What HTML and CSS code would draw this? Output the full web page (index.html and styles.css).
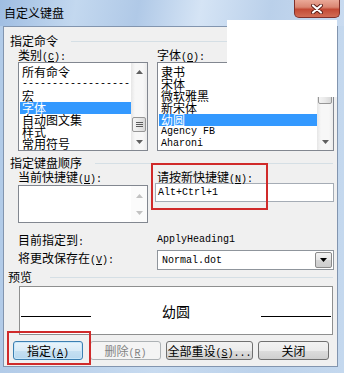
FILE: index.html
```html
<!DOCTYPE html>
<html lang="zh-CN">
<head>
  <meta charset="UTF-8" />
  <title>自定义键盘</title>
  <link rel="stylesheet" href="styles.css">
</head>
<body>
  <div class="window">
    <div class="titlebar">
      <span class="title">自定义键盘</span>
      <span class="close">
        <svg width="12" height="10" viewBox="0 0 12 10">
          <path d="M2 1.5 L10 8.5 M10 1.5 L2 8.5" stroke="#5b1d16" stroke-width="4" stroke-linecap="round"/>
          <path d="M2 1.5 L10 8.5 M10 1.5 L2 8.5" stroke="#fff" stroke-width="2.2" stroke-linecap="round"/>
        </svg>
      </span>
    </div>

    <div class="client">
      <div class="group-title">指定命令</div>
      <div class="pair">
        <div class="field">
          <div class="label">类别<span class="ak">(<u>C</u>):</span></div>
          <div class="listbox">
            <ul class="items">
              <li>所有命令</li>
              <li class="sep">------------------</li>
              <li>宏</li>
              <li class="sel">字体</li>
              <li>自动图文集</li>
              <li>样式</li>
              <li>常用符号</li>
            </ul>
            <div class="vscroll">
              <div class="arrow"><svg width="7" height="4" viewBox="0 0 7 4"><path d="M0 4 L3.5 0 L7 4 Z" fill="#606060"/></svg></div>
              <div class="track"><div class="thumb thumb-cat"><svg width="7" height="7" viewBox="0 0 7 7"><path d="M0 1.5 H7 M0 3.5 H7 M0 5.5 H7" stroke="#5c5c5c" stroke-width="1"/></svg></div></div>
              <div class="arrow"><svg width="7" height="4" viewBox="0 0 7 4"><path d="M0 0 L7 0 L3.5 4 Z" fill="#606060"/></svg></div>
            </div>
          </div>
        </div>
        <div class="field">
          <div class="label">字体<span class="ak">(<u>O</u>):</span></div>
          <div class="listbox">
            <ul class="items">
              <li>隶书</li>
              <li>宋体</li>
              <li>微软雅黑</li>
              <li>新宋体</li>
              <li class="sel">幼圆</li>
              <li class="mono">Agency FB</li>
              <li class="mono">Aharoni</li>
            </ul>
            <div class="vscroll">
              <div class="arrow"><svg width="7" height="4" viewBox="0 0 7 4"><path d="M0 4 L3.5 0 L7 4 Z" fill="#606060"/></svg></div>
              <div class="track"><div class="thumb thumb-font"></div></div>
              <div class="arrow"><svg width="7" height="4" viewBox="0 0 7 4"><path d="M0 0 L7 0 L3.5 4 Z" fill="#606060"/></svg></div>
            </div>
          </div>
        </div>
      </div>

      <div class="group-title group-keys">指定键盘顺序</div>
      <div class="pair">
        <div class="field">
          <div class="label">当前快捷键<span class="ak">(<u>U</u>):</span></div>
          <div class="listbox short">
            <ul class="items"></ul>
            <div class="vscroll disabled">
              <div class="arrow"><svg width="7" height="4" viewBox="0 0 7 4"><path d="M0 4 L3.5 0 L7 4 Z" fill="#c2c2c2"/></svg></div>
              <div class="arrow"><svg width="7" height="4" viewBox="0 0 7 4"><path d="M0 0 L7 0 L3.5 4 Z" fill="#c2c2c2"/></svg></div>
            </div>
          </div>
        </div>
        <div class="field">
          <div class="label">请按新快捷键<span class="ak">(<u>N</u>):</span></div>
          <div class="textbox mono">Alt+Ctrl+1</div>
        </div>
      </div>

      <div class="pair info">
        <div class="label">目前指定到<span class="ak">:</span></div>
        <div class="label mono">ApplyHeading1</div>
      </div>

      <div class="pair save">
        <div class="label">将更改保存在<span class="ak">(<u>V</u>):</span></div>
        <div class="combo">
          <span class="mono">Normal.dot</span>
          <span class="drop"><svg width="7" height="4" viewBox="0 0 7 4"><path d="M0 0 L7 0 L3.5 4 Z" fill="#000"/></svg></span>
        </div>
      </div>

      <div class="group-title group-preview">预览</div>
      <div class="preview">
        <span class="pv-line"></span>
        <span class="pv-text">幼圆</span>
        <span class="pv-line"></span>
      </div>

      <div class="buttons">
        <span class="btn default w-assign">指定<span class="ak">(<u>A</u>)</span></span>
        <span class="btn disabled w-delete">删除<span class="ak">(<u>R</u>)</span></span>
        <span class="btn w-reset">全部重设<span class="ak">(<u>S</u>)...</span></span>
        <span class="btn w-close">关闭</span>
      </div>
    </div>

    <!-- white patch over the top right corner -->
    <div class="patch"></div>
    <!-- red highlight marks -->
    <div class="mark mark-keys"></div>
    <div class="mark mark-assign"></div>
  </div>
</body>
</html>
```

FILE: styles.css
```css
* {
  box-sizing: border-box;
}
body {
  margin: 0;
  font-family: "Noto Sans CJK SC", sans-serif;
  font-size: 12px;
  color: #000;
}
u {
  text-decoration: underline;
  text-underline-offset: 1px;
}
.mono {
  font-family: "Liberation Mono", monospace;
  font-size: 10px;
}
.ak {
  font-family: "Liberation Mono", monospace;
  font-size: 10px;
}

.window {
  position: relative;
  width: 344px;
  height: 373px;
  overflow: hidden;
  background: linear-gradient(to right, #b2cbe8, #c8dbf0 45%, #bcd2eb 75%, #c4d8ee);
}
.titlebar {
  height: 26px;
  display: flex;
  justify-content: space-between;
  align-items: flex-start;
  background: linear-gradient(100deg, #9fbde2 0%, #c3d8ef 22%, #b0c9e7 40%, #d5e4f5 58%, #bad0ea 78%, #c9dbf0 100%);
}
.title {
  margin: 5px 0 0 4px;
  line-height: 16px;
}
.close {
  width: 46px;
  height: 18px;
  margin-right: 4px;
  border: 1px solid #80302a;
  border-top: none;
  border-radius: 0 0 5px 5px;
  background: linear-gradient(#eaa998 0%, #da8672 42%, #c34a35 55%, #d26d55 100%);
  display: flex;
  align-items: center;
  justify-content: center;
}

.client {
  height: 341px;
  margin: 0 6px 0 3px;
  border: 1px solid #8295af;
  background: #f0f0f0;
  padding: 0 3px 0 6px;
}
.group-title {
  display: flex;
  align-items: center;
  height: 14px;
  line-height: 14px;
  margin-top: 7px;
}
.group-title::after {
  content: "";
  flex: 1;
  border-top: 1px solid #d5dfe5;
  margin: 0 1px 0 13px;
}
.group-keys {
  margin-top: 5px;
}
.group-preview {
  margin-top: 0;
  margin-left: -2px;
}
.group-preview::after {
  margin-left: 18px;
}

.pair {
  display: grid;
  grid-template-columns: 130px 177px;
  column-gap: 9px;
  margin-left: 8px;
}
.label {
  height: 14px;
  line-height: 14px;
  white-space: nowrap;
}

.listbox {
  display: flex;
  height: 89px;
  border: 1px solid #828790;
  background: #fff;
}
.listbox.short {
  height: 38px;
  margin-top: 1px;
}
.items {
  flex: 1;
  list-style: none;
  margin: 0;
  padding: 3px 0 0 1px;
  line-height: 12px;
  overflow: hidden;
}
.items li {
  height: 12px;
  padding-left: 2px;
  white-space: nowrap;
  overflow: hidden;
}
.items .sel {
  background: #3399ff;
  color: #fff;
}
.items .sep {
  font-family: "Liberation Mono", monospace;
  font-size: 10px;
}

.vscroll {
  width: 16px;
  display: flex;
  flex-direction: column;
  background: linear-gradient(to right, #e6e6e6, #f7f7f7 25%, #f7f7f7 75%, #ebebeb);
}
.vscroll.disabled {
  justify-content: space-between;
  background: #fbfbfb;
  padding: 1px 0;
}
.arrow {
  height: 17px;
  display: flex;
  align-items: center;
  justify-content: center;
}
.track {
  flex: 1;
  padding: 0 1px;
}
.thumb {
  border: 1px solid #979797;
  border-radius: 2px;
  background: linear-gradient(to right, #f4f4f4, #e9e9e9 50%, #d8d8d8);
  display: flex;
  align-items: center;
  justify-content: center;
}
.thumb-cat {
  margin-top: 37px;
  height: 15px;
}
.thumb-font {
  height: 24px;
}

.textbox {
  height: 19px;
  margin: -1px 0 0 -2px;
  width: 179px;
  border: 1px solid #a5acb5;
  background: #fff;
  line-height: 17px;
  padding-left: 2px;
}

.info {
  margin-top: 10px;
}
.save {
  margin-top: 3px;
}
.save .label {
  margin-top: 1px;
}
.combo {
  height: 20px;
  border: 1px solid #8f959c;
  background: #fff;
  display: flex;
  align-items: center;
  justify-content: space-between;
  padding: 0 1px 0 4px;
}
.drop {
  width: 17px;
  height: 16px;
  border: 1px solid #8a8a8a;
  border-radius: 2px;
  background: linear-gradient(#f3f3f3, #e6e6e6 50%, #d6d6d6 50%, #cdcdcd);
  display: flex;
  align-items: center;
  justify-content: center;
}

.preview {
  height: 49px;
  width: 314px;
  margin: 2px 0 0 9px;
  border: 1px solid #8e8f8f;
  background: #fff;
  display: flex;
  align-items: flex-start;
  justify-content: space-between;
  padding: 0 1px;
}
.pv-line {
  width: 70px;
  margin-top: 29px;
  border-top: 1px solid #000;
}
.pv-text {
  margin-top: 17px;
  font-size: 14px;
  line-height: 14px;
}

.buttons {
  display: flex;
  gap: 5px;
  margin: 6px 0 0 3px;
}
.btn {
  height: 19px;
  border: 1px solid #707070;
  border-radius: 3px;
  background: linear-gradient(#f2f2f2, #ebebeb 50%, #dddddd 50%, #cfcfcf);
  line-height: 17px;
  text-align: center;
  white-space: nowrap;
}
.btn.default {
  border-color: #3c7fb1;
  background: linear-gradient(#e9f4fb, #d9ebf7 50%, #c6e0f2 50%, #b9d8ee);
  box-shadow: inset 0 0 0 1px #c9e7fa;
}
.btn.disabled {
  border-color: #adb2b5;
  background: #f4f4f4;
  color: #838383;
}
.w-assign { width: 70px; margin-right: 2px; }
.w-delete { width: 71px; }
.w-reset { width: 87px; }
.w-close { width: 71px; }

.patch {
  position: absolute;
  left: 227px;
  top: 20px;
  width: 110px;
  height: 77px;
  background: #fff;
}
.mark {
  position: absolute;
  border: 2px solid #d02a2a;
}
.mark-keys {
  left: 151px;
  top: 163px;
  width: 117px;
  height: 47px;
}
.mark-assign {
  left: 7px;
  top: 331px;
  width: 84px;
  height: 34px;
}
```
